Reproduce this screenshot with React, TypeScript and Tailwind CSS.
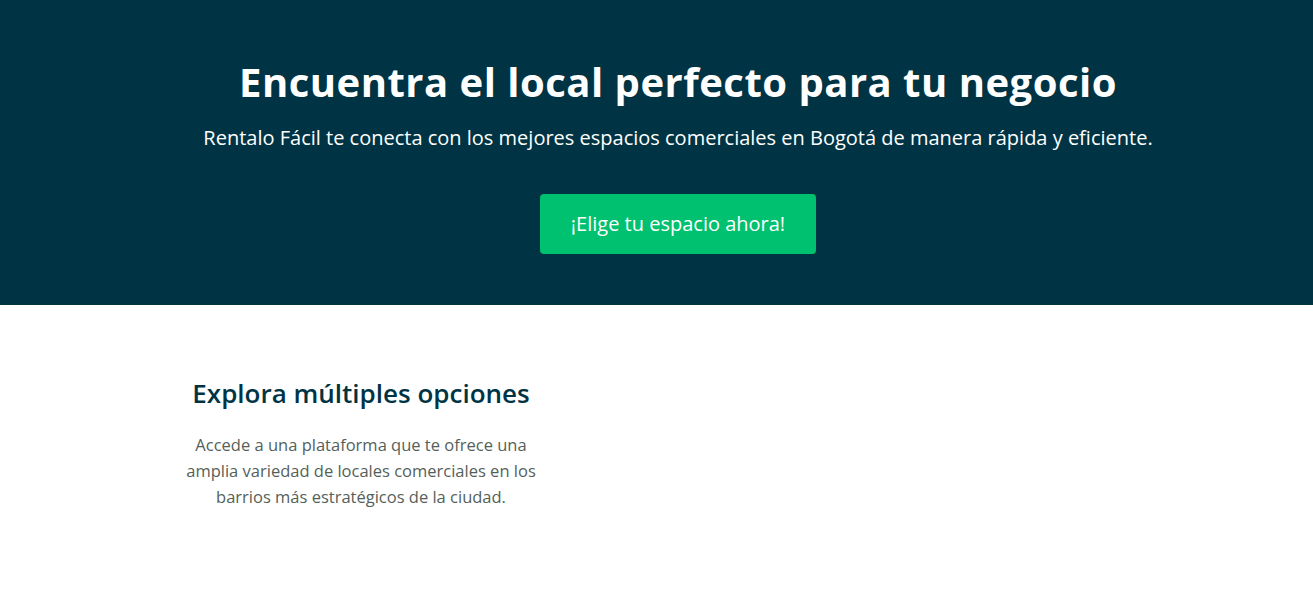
export default function App() {
  return (
    <div className="min-h-[602px] bg-white" style={{ fontFamily: '"Open Sans", "Noto Sans", sans-serif' }}>
      <section className="bg-[#003444] h-[305px] flex flex-col items-center pt-[52px] pl-[43px]">
        <h1 className="text-white text-[40px] font-bold leading-[60px] tracking-[0.5px]">Encuentra el local perfecto para tu negocio</h1>
        <p className="text-white text-[20px] leading-[28px] mt-[12px]">Rentalo Fácil te conecta con los mejores espacios comerciales en Bogotá de manera rápida y eficiente.</p>
        <button className="mt-[42px] w-[276px] h-[60px] rounded-[4px] bg-[#00c16f] text-white text-[20px]">¡Elige tu espacio ahora!</button>
      </section>
      <section className="flex pl-[171px] pt-[72px]">
        <div className="w-[380px] flex flex-col items-center text-center">
          <h2 className="text-[#003444] text-[26px] font-semibold leading-[32px]">Explora múltiples opciones</h2>
          <p className="mt-[23px] text-[#555f5a] text-[16.5px] leading-[26px] w-[364px]">Accede a una plataforma que te ofrece una amplia variedad de locales comerciales en los barrios más estratégicos de la ciudad.</p>
        </div>
      </section>
    </div>
  );
}
